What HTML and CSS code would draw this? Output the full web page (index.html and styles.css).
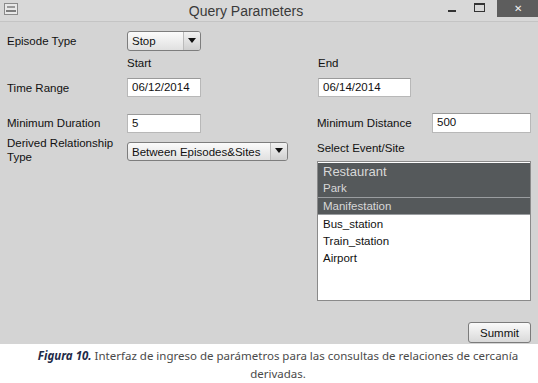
FILE: index.html
```html
<!DOCTYPE html>
<html lang="es">
<head>
    <meta charset="UTF-8">
    <title>Query Parameters</title>
    <link rel="stylesheet" href="styles.css">
</head>
<body>
    <div class="window">
        <div class="titlebar">
            <span class="app-icon">
                <svg width="14" height="12" viewBox="0 0 14 12">
                    <rect x="0.5" y="0.5" width="13" height="11" fill="#e8e8e8" stroke="#8a8a8a"/>
                    <rect x="3" y="3" width="8" height="2" fill="#9a9a9a"/>
                    <rect x="2" y="7" width="10" height="2" fill="#7d7d7d"/>
                </svg>
            </span>
            <span class="title">Query Parameters</span>
            <span class="win-btn min"><i></i></span>
            <span class="win-btn max"><i></i></span>
            <span class="win-btn close">&#x2715;</span>
        </div>

        <div class="form">
            <div class="row r1">
                <label>Episode Type</label>
                <div class="select small"><span>Stop</span><b></b></div>
            </div>
            <div class="row r2">
                <span></span>
                <span class="head">Start</span>
                <span class="head end">End</span>
            </div>
            <div class="row r3">
                <label>Time Range</label>
                <div class="input">06/12/2014</div>
                <div class="input wide">06/14/2014</div>
            </div>
            <div class="row r4">
                <label>Minimum Duration</label>
                <div class="input">5</div>
                <label>Minimum Distance</label>
                <div class="input full">500</div>
            </div>
            <div class="row r5">
                <label>Derived Relationship<br>Type</label>
                <div class="select large"><span>Between Episodes&amp;Sites</span><b></b></div>
                <label class="event">Select Event/Site</label>
            </div>
            <div class="list-wrap">
                <ul class="list">
                    <li class="sel big">Restaurant</li>
                    <li class="sel">Park</li>
                    <li class="sel focus">Manifestation</li>
                    <li>Bus_station</li>
                    <li>Train_station</li>
                    <li>Airport</li>
                </ul>
            </div>
            <div class="actions">
                <button type="button">Summit</button>
            </div>
        </div>
    </div>
    <p class="caption"><em>Figura 10.</em> Interfaz de ingreso de parámetros para las consultas de relaciones de cercanía derivadas.</p>
</body>
</html>
```

FILE: styles.css
```css
body {
    margin: 0;
    background: #fff;
    font-family: "Liberation Sans", Arial, sans-serif;
}
.window {
    width: 538px;
    height: 344px;
    background: #d4d4d4;
    color: #111;
    font-size: 11.5px;
}
.titlebar {
    height: 22px;
    background: #d8d8d8;
    border-bottom: 1px solid #c4c4c4;
    box-sizing: border-box;
    display: flex;
    align-items: flex-start;
}
.app-icon {
    width: 14px;
    margin: 3px 0 0 4px;
}
.title {
    flex: 1;
    text-align: center;
    font-size: 14px;
    color: #3a3a3a;
    padding: 3px 0 0 35px;
}
.win-btn {
    height: 17px;
    display: flex;
    align-items: center;
    justify-content: center;
}
.win-btn.min {
    width: 26px;
}
.win-btn.min i {
    width: 8px;
    height: 2px;
    background: #333;
    margin-top: 5px;
}
.win-btn.max {
    width: 28px;
}
.win-btn.max i {
    width: 9px;
    height: 6px;
    border: 1px solid #333;
    border-top-width: 2px;
    margin-top: -3px;
}
.win-btn.close {
    width: 41px;
    margin-left: 4px;
    background: #5d5d5d;
    color: #f0f0f0;
    font-size: 10px;
}
.form {
    padding: 9px 7px 0 7px;
}
.row {
    display: grid;
    grid-template-columns: 120px 189px 116px 1fr;
    align-items: center;
}
.r1 { height: 20px; }
.r2 { height: 16px; margin-top: 4px; }
.r3 { height: 19px; margin-top: 7px; }
.r4 { height: 20px; margin-top: 16px; }
.r5 { height: 28px; margin-top: 1px; align-items: start; }
.r5 label { line-height: 14px; margin-top: 2px; }
.r5 .select { margin-top: 8px; }
.r5 .event { margin-top: 7px; margin-left: 1px; }
.r4 label + .input + label { margin-left: 1px; }
.head.end { grid-column: 3; margin-left: 2px; }
.r3 .input.wide { margin-left: 2px; width: 93px; }
.input {
    height: 19px;
    box-sizing: border-box;
    width: 74px;
    background: #fff;
    border: 1px solid #b8b8b8;
    border-top-color: #9a9a9a;
    padding: 2px 0 0 4px;
}
.input.full { width: 99px; height: 20px; }
.select {
    display: flex;
    box-sizing: border-box;
    border: 1px solid #7d7d7d;
    border-radius: 3px;
    background: linear-gradient(#fbfbfb, #e0e0e0);
    align-items: stretch;
}
.select span {
    flex: 1;
    padding: 3px 0 0 4px;
    white-space: nowrap;
}
.select b {
    width: 16px;
    border-left: 1px solid #bbb;
    background: linear-gradient(#f2f2f2, #cfcfcf);
    position: relative;
    border-radius: 0 2px 2px 0;
}
.select b::after {
    content: "";
    position: absolute;
    left: 4px;
    top: 6px;
    border-left: 4px solid transparent;
    border-right: 4px solid transparent;
    border-top: 5px solid #111;
}
.select.small { width: 74px; height: 20px; }
.select.large { width: 161px; height: 19px; }
.select.large b::after { top: 5px; }
.list-wrap {
    display: flex;
    justify-content: flex-end;
    margin-top: -1px;
}
.list {
    list-style: none;
    margin: 0;
    padding: 1px 0 0 0;
    width: 214px;
    height: 140px;
    box-sizing: border-box;
    background: #fff;
    border: 1px solid #8a8a8a;
}
.list li {
    height: 17px;
    line-height: 17px;
    padding-left: 5px;
    font-size: 11.5px;
}
.list li.sel {
    background: #55595b;
    color: #d8d8d8;
}
.list li.big {
    font-size: 13px;
}
.list li.focus {
    border-top: 1px solid #9a9da0;
    border-bottom: 1px solid #9a9da0;
    height: 16px;
    line-height: 16px;
    margin-bottom: 1px;
}
.actions {
    display: flex;
    justify-content: flex-end;
    margin-top: 21px;
}
button {
    width: 63px;
    height: 21px;
    font-family: inherit;
    font-size: 11.5px;
    color: #111;
    border: 1px solid #7b7b7b;
    border-radius: 3px;
    background: linear-gradient(#fafafa, #d9d9d9);
    padding: 0;
}
.caption {
    margin: 3px 0 0 0;
    text-align: center;
    font-family: "Noto Sans", "Open Sans", sans-serif;
    font-size: 11.5px;
    line-height: 18px;
    color: #4a4a4a;
    padding: 0 0 0 18px;
}
.caption em {
    font-weight: bold;
    color: #1f2b48;
}
```
